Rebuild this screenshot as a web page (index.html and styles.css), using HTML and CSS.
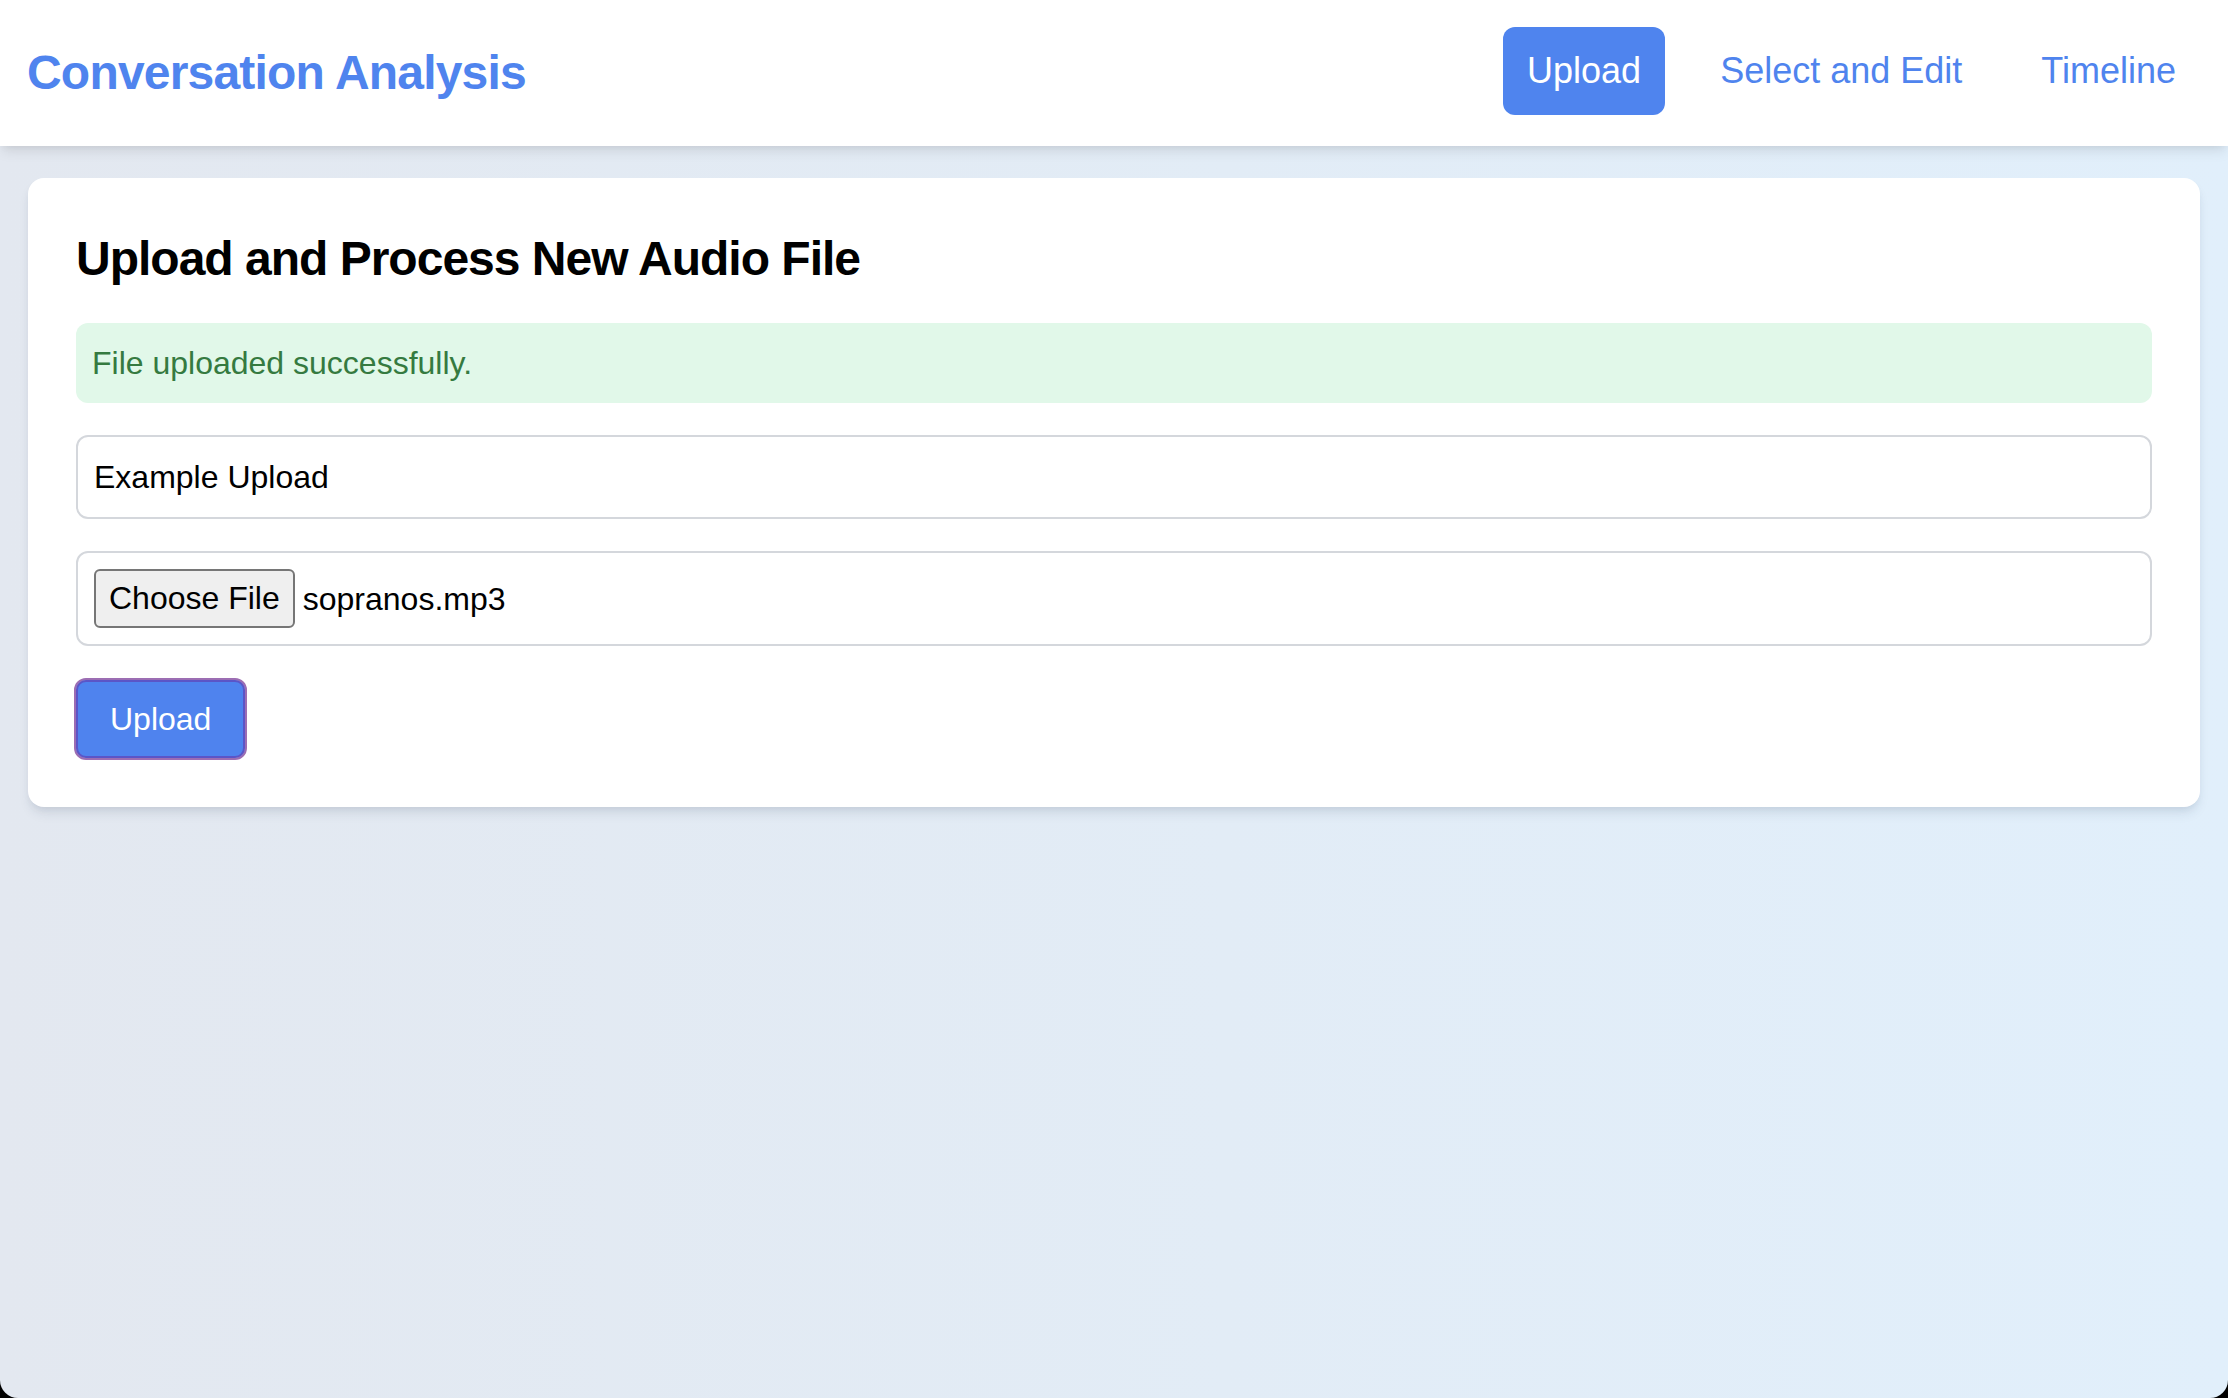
FILE: index.html
```html
<!DOCTYPE html>
<html lang="en">
<head>
<meta charset="utf-8">
<title>Conversation Analysis</title>
<link rel="stylesheet" href="styles.css">
</head>
<body>
<div class="app">
  <header class="topbar">
    <h1 class="brand">Conversation Analysis</h1>
    <nav class="nav">
      <a class="nav-link active" href="#">Upload</a>
      <a class="nav-link" href="#">Select and Edit</a>
      <a class="nav-link" href="#">Timeline</a>
    </nav>
  </header>
  <main class="main">
    <section class="card">
      <h2 class="card-title">Upload and Process New Audio File</h2>
      <div class="alert-success">File uploaded successfully.</div>
      <form class="upload-form">
        <div class="field">Example Upload</div>
        <div class="field file-field">
          <span class="file-btn">Choose File</span>
          <span class="file-name">sopranos.mp3</span>
        </div>
        <div class="actions">
          <button type="button" class="submit-btn">Upload</button>
        </div>
      </form>
    </section>
  </main>
  <div class="window-corners"></div>
</div>
</body>
</html>
```

FILE: styles.css
```css
* { box-sizing: border-box; }

html, body {
  margin: 0;
  padding: 0;
  height: 100%;
}

body {
  font-family: "Liberation Sans", Arial, sans-serif;
  color: #000;
  background: linear-gradient(to right, #e3e8f0 0%, #e2ecf6 55%, #e1effb 100%);
  overflow: hidden;
}

.app {
  min-height: 100vh;
  display: flex;
  flex-direction: column;
}

.topbar {
  background: #fff;
  height: 146px;
  padding: 0 28px 0 27px;
  display: flex;
  align-items: center;
  justify-content: space-between;
  box-shadow: 0 8px 12px -2px rgba(0, 0, 0, 0.08), 0 4px 8px -4px rgba(0, 0, 0, 0.08);
  position: relative;
  z-index: 1;
}

.brand {
  margin: 0;
  font-size: 48px;
  line-height: 64px;
  font-weight: 700;
  letter-spacing: -0.8px;
  color: #4f84ee;
}

.nav {
  display: flex;
  gap: 31px;
  margin-top: -4px;
}

.nav-link {
  display: block;
  padding: 16px 24px;
  font-size: 36px;
  line-height: 56px;
  color: #4f84ee;
  text-decoration: none;
  border-radius: 12px;
}

.nav-link.active {
  background: #4f84ee;
  color: #fff;
}

.main {
  padding: 32px 28px;
}

.card {
  background: #fff;
  border-radius: 16px;
  padding: 48px 48px 47px;
  box-shadow: 0 8px 12px -2px rgba(30, 50, 80, 0.10), 0 4px 8px -4px rgba(30, 50, 80, 0.10);
}

.card-title {
  margin: 0 0 32px;
  padding-top: 1px;
  font-size: 48px;
  line-height: 64px;
  font-weight: 700;
  letter-spacing: -1px;
}

.alert-success {
  background: #e1f8e9;
  color: #357a40;
  font-size: 32px;
  line-height: 48px;
  padding: 16px 16px;
  border-radius: 12px;
  margin-bottom: 32px;
}

.upload-form {
  display: flex;
  flex-direction: column;
  gap: 32px;
}

.field {
  border: 2px solid #d4d7dc;
  border-radius: 12px;
  padding: 16px 16px;
  font-size: 32px;
  line-height: 48px;
  color: #000;
}

.file-field {
  display: flex;
  align-items: center;
  gap: 8px;
  padding: 16px 16px;
}

.file-btn {
  display: inline-block;
  height: 59px;
  padding: 0 13px;
  line-height: 55px;
  font-size: 32px;
  background: #efefef;
  border: 2px solid #767676;
  border-radius: 6px;
  color: #000;
}

.file-name {
  font-size: 32px;
  line-height: 48px;
}

.actions {
  display: flex;
}

.submit-btn {
  font-family: inherit;
  font-size: 32px;
  line-height: 48px;
  padding: 15px 34px;
  color: #fff;
  background: #4f83ee;
  border: 2px solid #9c6db3;
  box-shadow: inset 0 0 0 2px #5b55c7;
  border-radius: 12px;
  margin-left: -2px;
}

.window-corners {
  position: fixed;
  inset: 0;
  border-radius: 0 0 18px 18px;
  box-shadow: 0 0 0 60px #000;
  pointer-events: none;
  z-index: 10;
}
```
